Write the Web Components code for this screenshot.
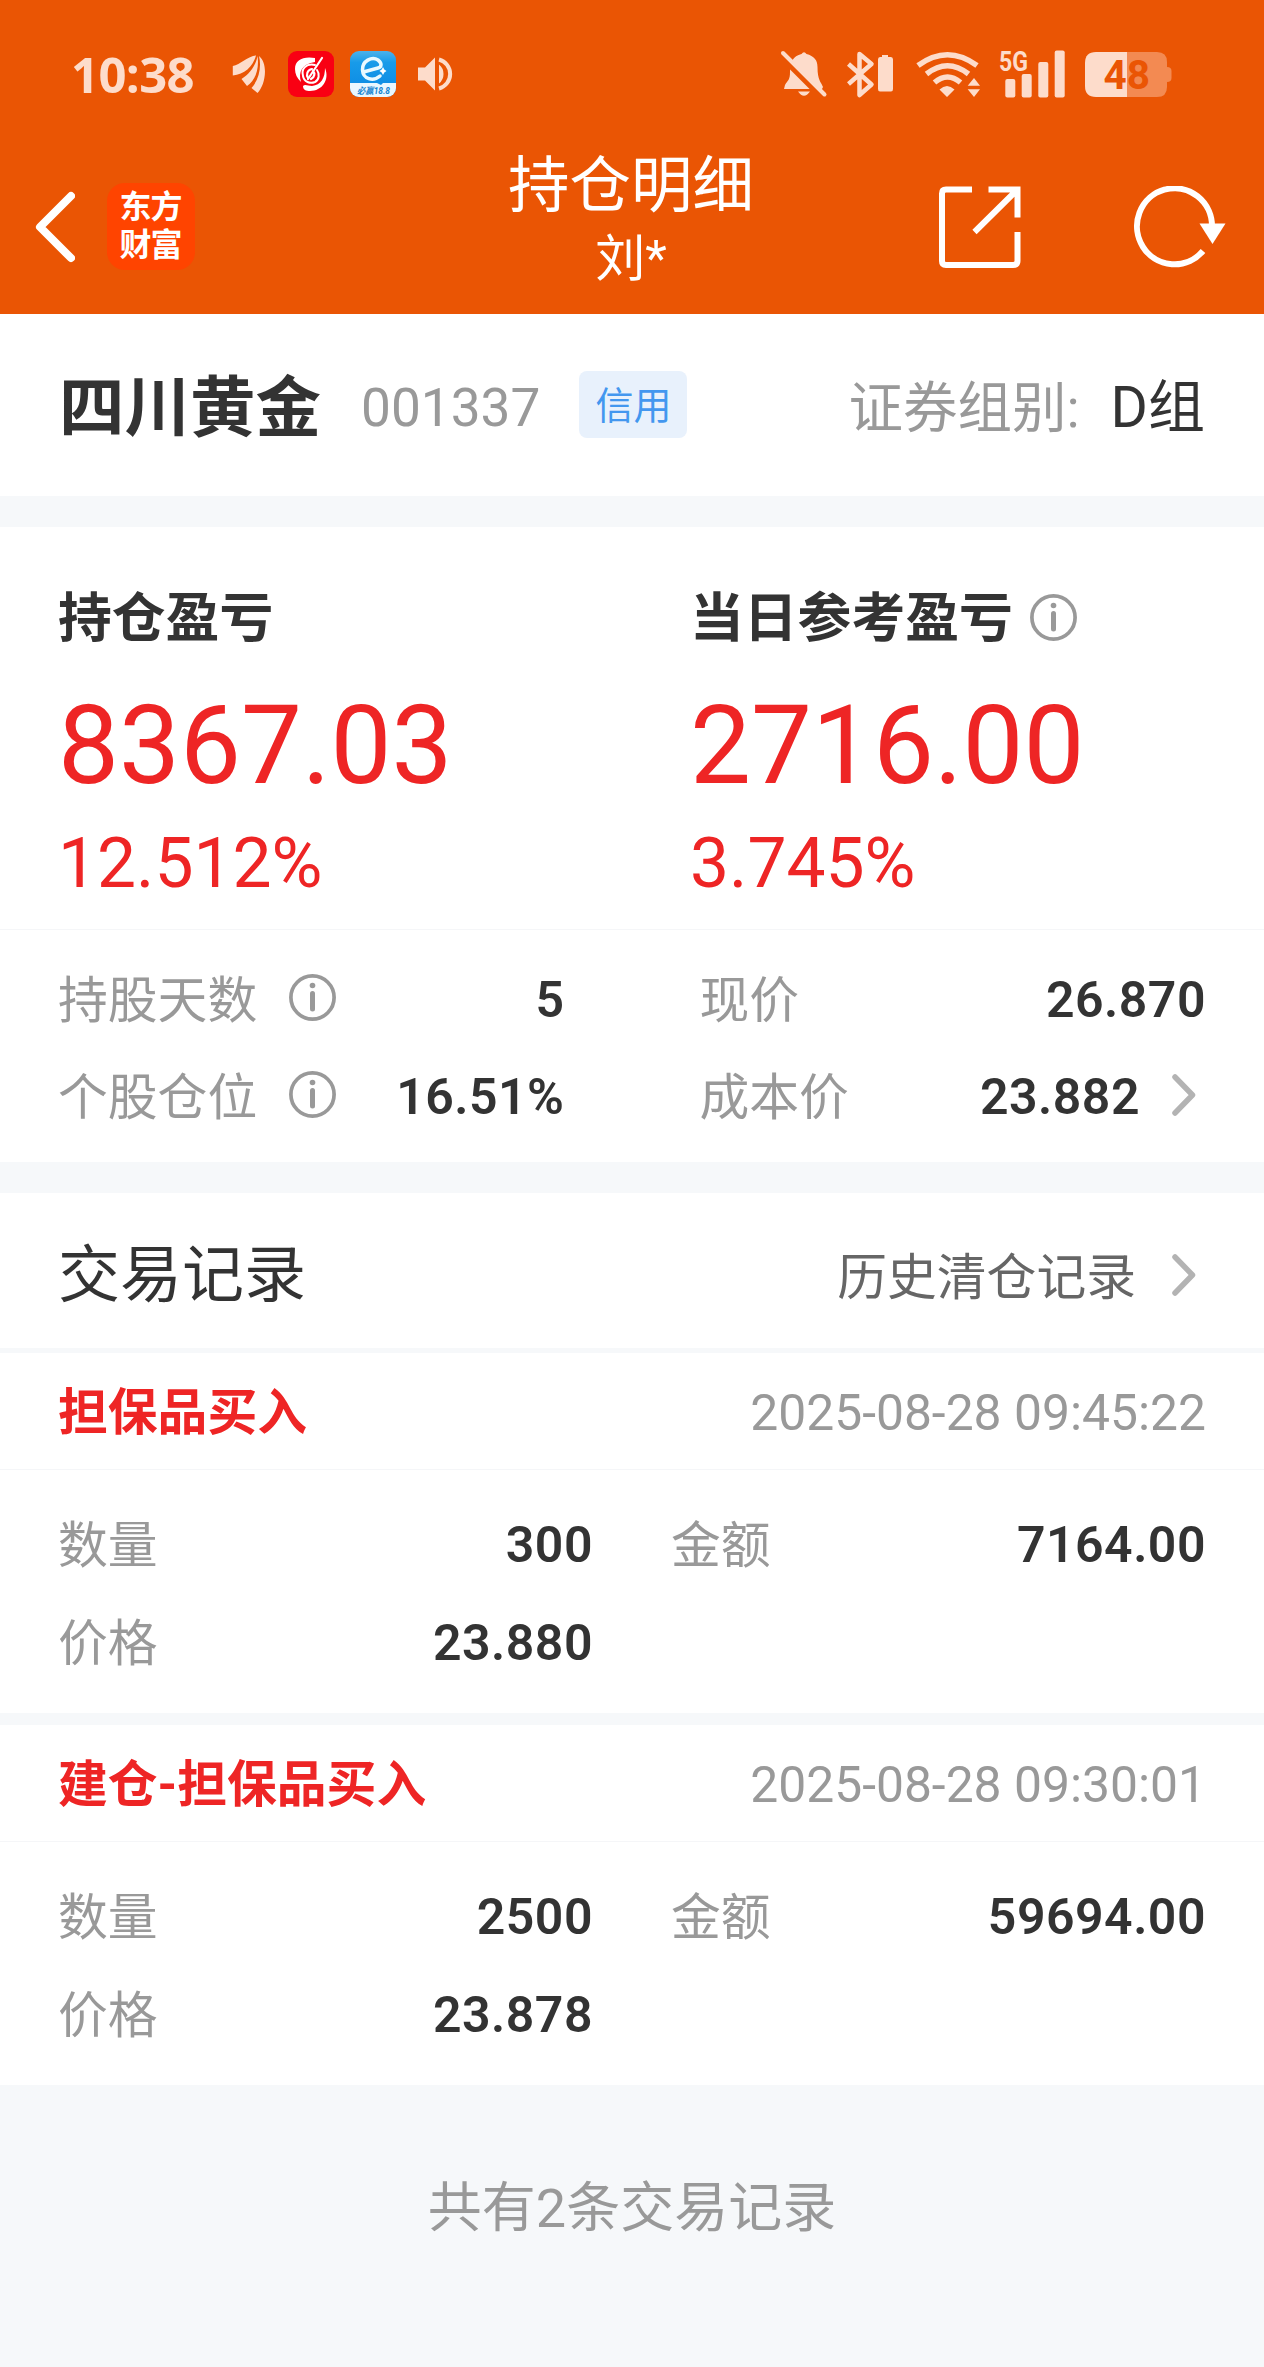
<!DOCTYPE html>
<html lang="zh-CN">
<head>
<meta charset="UTF-8">
<title>持仓明细</title>
<style>
  body {
    margin: 0;
    background: #f6f8fa;
    color: #333;
    font-family: Roboto, "Noto Sans CJK SC", sans-serif;
    font-size: 49.8px;
    line-height: 60px;
  }
</style>
</head>
<body>
<position-page></position-page>

<script>
function define(name, html, setup) {
    const template = document.createElement('template');
    template.innerHTML = html;

    customElements.define(
        name,
        class extends HTMLElement {
            constructor() {
                super();
                this.attachShadow({ mode: 'open' });
                this.shadowRoot.appendChild(template.content.cloneNode(true));
            }

            connectedCallback() {
                if (setup) setup(this, this.shadowRoot);
            }
        }
    );
}

define('info-icon', `
<style>
  :host { display: block; width: 47px; height: 47px; flex: none; }
  svg { display: block; }
</style>
<svg width="47" height="47" viewBox="0 0 47 47" fill="none" stroke="#999">
  <circle cx="23.5" cy="23.5" r="21.6" stroke-width="3.7"/>
  <circle cx="23.5" cy="11.5" r="2.8" fill="#999" stroke="none"/>
  <path d="M23.5 19.5V35" stroke-width="5" stroke-linecap="round"/>
</svg>
`);

define('chevron-icon', `
<style>
  :host { display: block; width: 24px; height: 42px; flex: none; }
  svg { display: block; }
</style>
<svg width="24" height="42" viewBox="0 0 24 42" fill="none" stroke="#b3b3b3" stroke-width="5.5" stroke-linecap="round" stroke-linejoin="round">
  <path d="M3 3L20.5 21L3 39"/>
</svg>
`);

define('status-bar', `
<style>
  :host {
    display: flex;
    align-items: center;
    justify-content: space-between;
    height: 148px;
    padding: 0 92px 0 71px;
    color: #fddccb;
  }
  div { display: flex; align-items: center; }
  svg { display: block; overflow: visible; fill: #fddccb; }
  .time {
    width: 161px;
    font: 700 49px/60px "Open Sans", sans-serif;
    letter-spacing: -.6px;
  }
</style>
<div>
  <span class="time">10:38</span>
  <svg width="34" height="38" viewBox="0 0 34 38">
    <path d="M24 .5C16 1 8 10 .8 11V20.5C12 19.5 21 12 24 .5Z"/>
    <path d="M25.5 1C24 10 18 19 9.5 24L15 31C23 26 27.5 14 25.5 1Z"/>
    <path d="M27 1C29.5 11 27.5 24 19.5 33L25.5 38C33 31 37 9 27 1Z"/>
  </svg>
  <svg style="margin-left:22px" width="46" height="46" viewBox="0 0 46 46">
    <rect width="46" height="46" rx="9" fill="#f90013"/>
    <path d="M27 7C15 5 7 9 7 18C7 23 9 27 13 31C10 21 14 13 27 11Z" fill="#fff"/>
    <path d="M37 17C42 29 34 40 22 40C18 40 15 39 15 35C17 33 20 35 24 35C33 34 37 27 37 17Z" fill="#fff"/>
    <g fill="none" stroke="#fff" stroke-linecap="round">
      <path d="M27 14C18 12 13 18 15 25C16 31 22 33 27 31C31 29 32 23 29 19" stroke-width="2"/>
      <path d="M24 18C19 19 18 24 20 27M25 20C27 22 27 26 23 28" stroke-width="2.2"/>
      <path d="M34 7L20 28" stroke-width="2.2"/>
    </g>
  </svg>
  <svg style="margin-left:16px" width="46" height="46" viewBox="0 0 46 46">
    <defs>
      <clipPath id="round"><rect width="46" height="46" rx="9"/></clipPath>
      <linearGradient id="sky" x2="0" y2="1">
        <stop offset="0" stop-color="#4cb2ea"/>
        <stop offset=".25" stop-color="#189be9"/>
        <stop offset="1" stop-color="#0a87e2"/>
      </linearGradient>
    </defs>
    <g clip-path="url(#round)">
      <rect width="46" height="46" fill="url(#sky)"/>
      <path d="M0 32H27L31 34L33 32H46V46H0Z" fill="#e9f7ff"/>
      <path d="M13.5 21L28 17C32 16 32 12 28 9C22 5 12 10 12.5 19C13 28 23 31 30 25" fill="none" stroke="#e9f9ff" stroke-width="3.5" stroke-linecap="round"/>
      <path d="M33 16L34.3 18.5L36.5 20L34.3 21.5L33 24L31.7 21.5L29.5 20L31.7 18.5Z" fill="#fff"/>
      <text x="7" y="42.5" textLength="33" lengthAdjust="spacingAndGlyphs" font-family="Roboto, 'Noto Sans CJK SC', sans-serif" font-size="9" font-weight="700" font-style="italic" fill="#1282cf">必赢18.8</text>
    </g>
  </svg>
  <svg style="margin-left:21px" width="36" height="34" viewBox="0 0 36 34">
    <path d="M1 10.5H8L18 .5V33.5L8 23.5H1ZM22 7.5Q26.5 11 26.5 17T22 26.5Z"/>
    <path d="M22 2.5A15 15 0 0 1 22 31.5" fill="none" stroke="#fddccb" stroke-width="4"/>
  </svg>
</div>
<div>
  <svg width="46" height="46" viewBox="0 0 46 46">
    <path d="M20.5 3Q23 -.5 25.5 3C33 5 36.5 9 36.5 16C36.5 29 40 31 42 36L41 38H3L4 34C7 29 9 29 9 21C9 11 12 5 20.5 3ZM17 40.5H29Q23 49 17 40.5Z"/>
    <path d="M-1 4.5L40 45.5" stroke="#ea5504" stroke-width="5.5"/>
    <path d="M2 2L43.5 43.5" stroke="#fddccb" stroke-width="4" stroke-linecap="round"/>
  </svg>
  <svg style="margin-left:20px" width="47" height="47" viewBox="0 0 47 47">
    <path d="M1.5 13L24.5 33.5L12.5 44V3L24.5 13L1.5 33" fill="none" stroke="#fddccb" stroke-width="4.5" stroke-linejoin="round"/>
    <path d="M35 6V4H41V6H44Q46 6 46 8.5V38Q46 40.5 44 40.5H33Q31 40.5 31 38V8.5Q31 6 33 6Z"/>
  </svg>
  <svg style="margin-left:22px" width="65" height="47" viewBox="0 0 65 47">
    <g fill="none" stroke="#fddccb" stroke-width="5.5">
      <path d="M2 14.5Q31.5 -7 61 14.5"/>
      <path d="M10.5 23Q31.5 6.5 52.5 23"/>
      <path d="M18.5 31.5Q31.5 20.5 44.5 31.5"/>
    </g>
    <path d="M23.5 38.5Q31 31.5 38.5 38.5L31 46ZM51.7 34.7L58 27L64 34.7ZM51.7 38.3H64L58 46Z"/>
  </svg>
  <svg style="margin-left:18px" width="66" height="48" viewBox="0 0 66 48">
    <text x="0" y="20.5" textLength="29" lengthAdjust="spacingAndGlyphs" font-family="Roboto, sans-serif" font-size="28" font-weight="700">5G</text>
    <rect x="6.3" y="29" width="10" height="18.5" rx="2"/>
    <rect x="22.7" y="24" width="10" height="23.5" rx="2"/>
    <rect x="39.3" y="12" width="10" height="35.5" rx="2"/>
    <rect x="55.7" y=".5" width="10" height="47" rx="2"/>
  </svg>
  <svg style="margin-left:20px" width="87" height="45" viewBox="0 0 87 45">
    <path d="M42 0H72Q82 0 82 10V15Q86.5 15 86.5 19V26Q86.5 30 82 30V35Q82 45 72 45H42Z" fill="#f38a52"/>
    <path d="M42 0H11Q0 0 0 11V34Q0 45 11 45H42Z"/>
    <text x="18.5" y="37" font-family="Roboto, sans-serif" font-size="40.5" font-weight="700" fill="#ea5504">48</text>
  </svg>
</div>
`);

define('nav-bar', `
<style>
  :host {
    display: grid;
    grid-template-columns: 1fr auto 1fr;
    height: 166px;
    color: #fff;
  }
  svg { display: block; fill: none; stroke: #fff; }
  .left, .right { display: flex; align-items: center; height: 157px; }
  .left { padding-left: 35px; }
  .right { justify-content: flex-end; padding-right: 37px; gap: 113px; }
  .logo {
    box-sizing: border-box;
    width: 88px;
    height: 87px;
    margin-left: 32px;
    padding: 2px 1px 0 0;
    border-radius: 18px;
    background: #ff4400;
    font: 700 32px/38px "Noto Sans CJK SC", sans-serif;
    letter-spacing: -1px;
    text-align: center;
  }
  .center { padding-right: 2px; text-align: center; }
  .title { font-size: 61.5px; line-height: 77px; }
  .user { font-size: 50px; line-height: 68px; }
</style>
<div class="left">
  <svg width="40" height="72" viewBox="0 0 40 72" stroke-width="8" stroke-linecap="round" stroke-linejoin="round">
    <path d="M36 5L5 36L36 67"/>
  </svg>
  <div class="logo">东方<br>财富</div>
</div>
<div class="center">
  <div class="title"><slot name="title"></slot></div>
  <div class="user"><slot name="user"></slot></div>
</div>
<div class="right">
  <svg width="82" height="82" viewBox="0 0 82 82" stroke-width="6">
    <path d="M33 3.5H7Q3 3.5 3 7.5V75Q3 79 7 79H74Q78.5 79 78.5 75V46"/>
    <path d="M49.5 3.5H78.5V31.5M78 4L35.5 46"/>
  </svg>
  <svg width="93" height="82" viewBox="0 0 93 82" stroke-width="6">
    <path d="M78 41A37.5 38 0 1 0 69 65"/>
    <path d="M65.5 37.5H91.5L78.5 58Z" fill="#fff" stroke="none"/>
  </svg>
</div>
`);

define('stock-header', `
<style>
  :host {
    display: flex;
    align-items: center;
    box-sizing: border-box;
    height: 182px;
    padding: 6px 59px 0;
    background: #fff;
  }
  .name { padding-top: 2px; font-size: 65.5px; font-weight: 700; }
  .code { margin-left: 40px; font-size: 53.2px; color: #999; }
  .tag {
    box-sizing: border-box;
    height: 67px;
    margin: 0 0 7px 39px;
    padding: 2px 16px 0;
    border-radius: 8px;
    background: #e8f1fc;
    color: #4397ef;
    font-size: 38px;
    line-height: 67px;
  }
  .group { margin-left: auto; font-size: 54.5px; color: #999; }
  .group b { margin-left: 31px; font-size: 57px; font-weight: 400; color: #333; }
</style>
<span class="name"><slot></slot></span>
<span class="code"></span>
<span class="tag"></span>
<span class="group">证券组别:<b></b></span>
`, (el, root) => {
    root.querySelector('.code').textContent = el.getAttribute('code');
    root.querySelector('.tag').textContent = el.getAttribute('tag');
    root.querySelector('b').textContent = el.getAttribute('group');
});

define('profit-block', `
<style>
  :host { display: block; color: #ee2525; }
  .label {
    display: flex;
    align-items: center;
    gap: 17px;
    font-size: 53.8px;
    font-weight: 700;
    color: #333;
  }
  ::slotted(info-icon) { margin-bottom: 3px; }
  .amount { margin-top: 37px; font-size: 108.5px; line-height: 120px; }
  .rate { margin-top: 18px; font-size: 69.5px; line-height: 80px; }
</style>
<div class="label"><slot></slot></div>
<div class="amount"></div>
<div class="rate"></div>
`, (el, root) => {
    root.querySelector('.amount').textContent = el.getAttribute('amount');
    root.querySelector('.rate').textContent = el.getAttribute('rate');
});

define('metric-row', `
<style>
  :host { display: flex; align-items: center; height: 97px; }
  .label { padding-top: 2px; color: #999; }
  .value { margin-left: auto; font-size: 50px; font-weight: 600; letter-spacing: .5px; }
  ::slotted(info-icon) { margin: 0 0 4px 32px; }
  ::slotted(chevron-icon) { margin: 0 10px 3px 32px; }
</style>
<span class="label"></span>
<slot name="info"></slot>
<span class="value"></span>
<slot name="more"></slot>
`, (el, root) => {
    root.querySelector('.label').textContent = el.getAttribute('label');
    root.querySelector('.value').textContent = el.getAttribute('value');
});

define('record-title', `
<style>
  :host {
    display: flex;
    align-items: center;
    height: 155px;
    padding: 0 68px 0 58px;
    background: #fff;
    border-bottom: 5px solid #f6f8fa;
  }
  .title { padding-top: 10px; font-size: 62px; line-height: 80px; }
  .more { margin: 15px 36px 0 auto; color: #666; }
  chevron-icon { margin-top: 9px; }
</style>
<span class="title"><slot></slot></span>
<span class="more"><slot name="more"></slot></span>
<chevron-icon></chevron-icon>
`);

define('trade-record', `
<style>
  :host { display: block; height: 360px; background: #fff; }
  .head {
    display: flex;
    align-items: center;
    justify-content: space-between;
    box-sizing: border-box;
    height: 117px;
    padding: 4px 58px 0;
    border-bottom: 1px solid #f5f6f8;
    color: #999;
  }
  .kind { font-weight: 700; color: #ee2525; }
  .grid {
    display: grid;
    grid-template-columns: 1fr 1fr;
    gap: 1px 78px;
    padding: 26px 58px 0;
  }
</style>
<div class="head"><span class="kind"></span><span class="time"></span></div>
<div class="grid"><slot></slot></div>
`, (el, root) => {
    root.querySelector('.kind').textContent = el.getAttribute('kind');
    root.querySelector('.time').textContent = el.getAttribute('time');
});

define('position-page', `
<style>
  :host { display: block; }
  header { background: #ea5504; }
  .profit {
    display: grid;
    grid-template-columns: 1fr 1fr;
    box-sizing: border-box;
    height: 403px;
    margin-top: 31px;
    padding: 62px 0 0 58px;
    column-gap: 58px;
    border-bottom: 1px solid #f5f6f8;
    background: #fff;
  }
  .metrics {
    display: grid;
    grid-template-columns: 1fr 1fr;
    column-gap: 135px;
    margin-bottom: 31px;
    padding: 21px 58px 17px;
    background: #fff;
  }
  trade-record + trade-record { margin-top: 12px; }
  footer { padding-top: 94px; font-size: 54px; color: #999; text-align: center; }
</style>
<header>
  <status-bar></status-bar>
  <nav-bar><span slot="title">持仓明细</span><span slot="user">刘*</span></nav-bar>
</header>
<stock-header code="001337" tag="信用" group="D组">四川黄金</stock-header>
<section class="profit">
  <profit-block amount="8367.03" rate="12.512%">持仓盈亏</profit-block>
  <profit-block amount="2716.00" rate="3.745%">当日参考盈亏<info-icon></info-icon></profit-block>
</section>
<section class="metrics">
  <metric-row label="持股天数" value="5"><info-icon slot="info"></info-icon></metric-row>
  <metric-row label="现价" value="26.870"></metric-row>
  <metric-row label="个股仓位" value="16.51%"><info-icon slot="info"></info-icon></metric-row>
  <metric-row label="成本价" value="23.882"><chevron-icon slot="more"></chevron-icon></metric-row>
</section>
<record-title>交易记录<span slot="more">历史清仓记录</span></record-title>
<trade-record kind="担保品买入" time="2025-08-28 09:45:22">
  <metric-row label="数量" value="300"></metric-row>
  <metric-row label="金额" value="7164.00"></metric-row>
  <metric-row label="价格" value="23.880"></metric-row>
</trade-record>
<trade-record kind="建仓-担保品买入" time="2025-08-28 09:30:01">
  <metric-row label="数量" value="2500"></metric-row>
  <metric-row label="金额" value="59694.00"></metric-row>
  <metric-row label="价格" value="23.878"></metric-row>
</trade-record>
<footer>共有2条交易记录</footer>
`);
</script>
</body>
</html>
